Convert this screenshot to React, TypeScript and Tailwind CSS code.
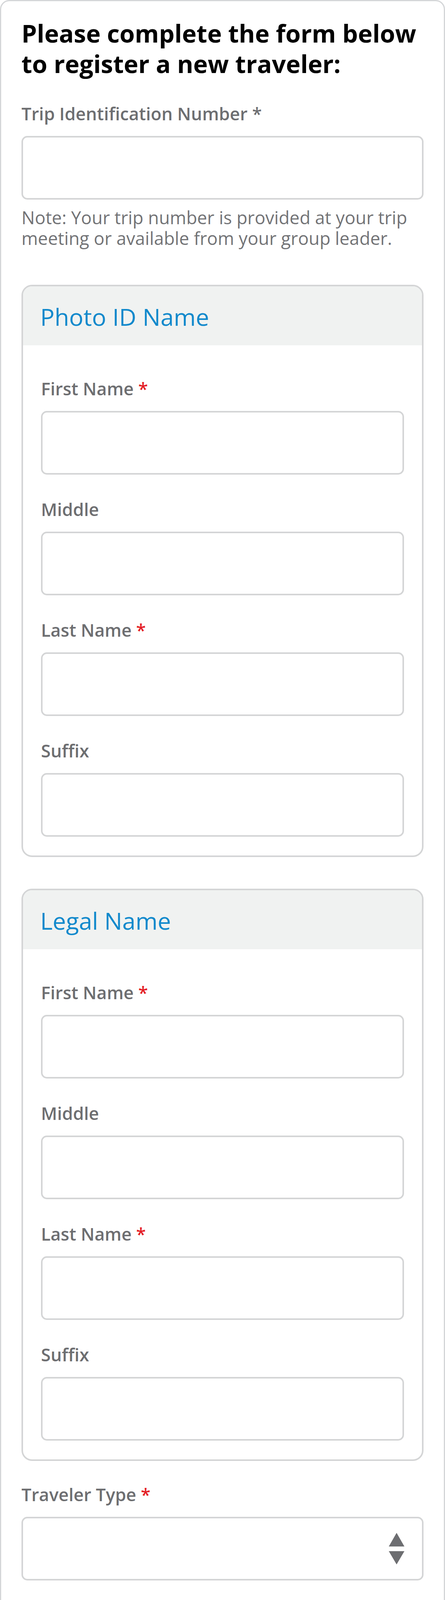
import { ReactNode } from "react"

function Req() {
  return <span className="text-[#e41e26]">*</span>
}

function FieldLabel({ children }: { children: ReactNode }) {
  return (
    <label className="mb-[30px] block text-[45px] leading-[54px] font-semibold text-[#6d6e71]">
      {children}
    </label>
  )
}

function TextInput() {
  return (
    <input
      type="text"
      className="block h-[163px] w-full rounded-[15px] border-4 border-[#d4d5d6] bg-white outline-none"
    />
  )
}

function SortArrows() {
  return (
    <svg width="40" height="81" viewBox="0 0 40 81" aria-hidden="true">
      <path d="M20 0L40 35H0Z" fill="#6d6e71" />
      <path d="M0 47H40L20 81Z" fill="#6d6e71" />
    </svg>
  )
}

function SelectBox() {
  return (
    <div className="flex h-[163px] w-full items-center justify-end rounded-[15px] border-4 border-[#d4d5d6] bg-white pr-[45px]">
      <SortArrows />
    </div>
  )
}

function Field({
  label,
  first,
  select,
  className = "",
}: {
  label: ReactNode
  first?: boolean
  select?: boolean
  className?: string
}) {
  return (
    <div className={(first ? "" : "mt-[62px] ") + className}>
      <FieldLabel>{label}</FieldLabel>
      {select ? <SelectBox /> : <TextInput />}
    </div>
  )
}

function Radio({ label }: { label: string }) {
  return (
    <label className="flex w-[266px] items-center gap-[20px]">
      <span className="block h-[60px] w-[60px] shrink-0 rounded-full border-4 border-[#d4d4d4] bg-white" />
      <span className="text-[45px] leading-[60px] font-semibold text-[#6d6e71]">
        {label}
      </span>
    </label>
  )
}

function NameCard({ title, className = "" }: { title: string; className?: string }) {
  return (
    <div
      className={
        "overflow-hidden rounded-[27px] border-4 border-[#d4d5d6] bg-white " +
        className
      }
    >
      <div className="bg-[#f0f2f1] px-[44px] pt-[38px] pb-[34px] text-[61px] leading-[79px] text-[#1189cc]">
        {title}
      </div>
      <div className="px-[46px] pt-[84px] pb-[48px]">
        <Field
          first
          label={
            <>
              First Name <Req />
            </>
          }
        />
        <Field label="Middle" />
        <Field
          label={
            <>
              Last Name <Req />
            </>
          }
        />
        <Field label="Suffix" />
      </div>
    </div>
  )
}

export default function App() {
  return (
    <div className="w-[1140px] bg-white font-['Open_Sans',sans-serif]">
      <form className="relative rounded-[24px] border-[3px] border-[#d4d6d8] px-[52px] pt-[43px] pb-[60px]">
        <h1 className="text-[63px] leading-[78px] font-bold text-black">
          Please complete the form below to register a new traveler:
        </h1>

        <div className="mt-[62px]">
          <FieldLabel>Trip Identification Number *</FieldLabel>
          <TextInput />
          <p className="mt-[19px] text-[45.5px] leading-[53px] text-[#727376]">
            Note: Your trip number is provided at your trip meeting or
            available from your group leader.
          </p>
        </div>

        <NameCard title="Photo ID Name" className="mt-[93px]" />
        <NameCard title="Legal Name" className="mt-[81px]" />

        <Field
          first
          select
          className="mt-[59px]"
          label={
            <>
              Traveler Type <Req />
            </>
          }
        />
        <Field select label="Instrument" />
        <Field label="Passport Number" />
        <Field
          label={
            <>
              Birthdate <Req />
            </>
          }
        />
        <Field label="Cell Phone" />

        <div className="mt-[65px]">
          <label className="mb-[32px] block text-[45px] leading-[54px] font-semibold text-[#6d6e71]">
            Gender <Req />
          </label>
          <div className="flex">
            <Radio label="Male" />
            <Radio label="Female" />
          </div>
        </div>

        <div className="mt-[63px]">
          <label className="mb-[30px] block text-[45px] leading-[54px] font-semibold text-[#6d6e71]">
            Special Needs
          </label>
          <div className="flex">
            <Radio label="Yes" />
            <Radio label="No" />
          </div>
        </div>

        <div className="mx-[40px] mt-[106px] h-[3px] bg-linear-to-r from-transparent via-[#d6d6d6] to-transparent" />

        <div className="mt-[87px] flex gap-[35px] px-[3px]">
          <button
            type="button"
            className="h-[118px] w-[335px] rounded-[11px] bg-[#1389c9] text-[54px] leading-[118px] font-bold text-white"
          >
            Complete
          </button>
          <button
            type="button"
            className="h-[118px] w-[637px] rounded-[11px] bg-[#1389c9] text-[54px] leading-[118px] font-bold text-white"
          >
            Add another traveler
          </button>
        </div>

        <svg
          className="absolute left-[387px] top-[5770px]"
          width="125"
          height="116"
          viewBox="0 0 125 116"
          aria-hidden="true"
        >
          <path d="M57 0L56 69L125 82L0 116Z" fill="#1283c6" />
        </svg>
      </form>
    </div>
  )
}
